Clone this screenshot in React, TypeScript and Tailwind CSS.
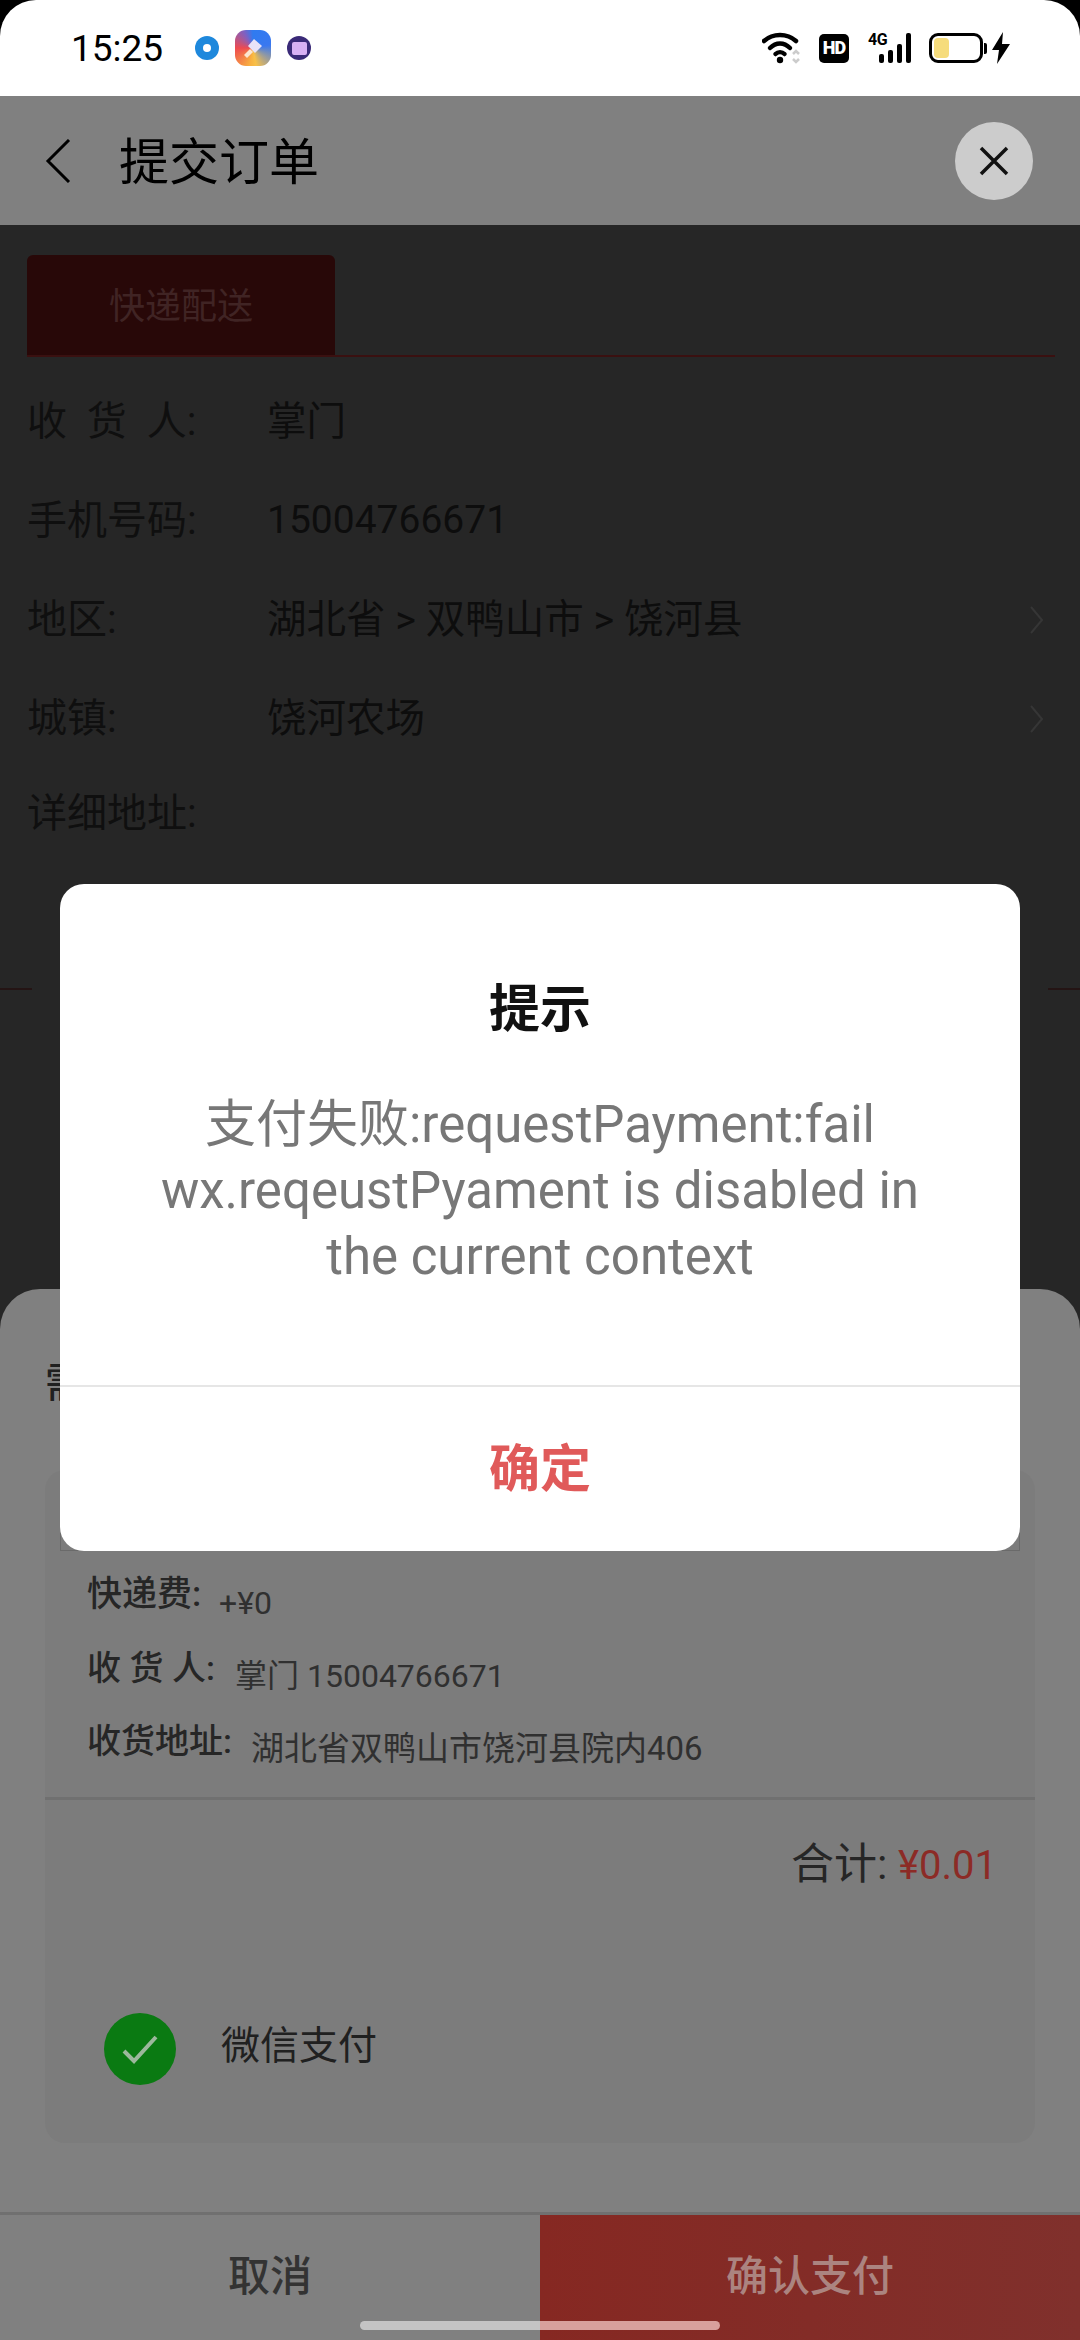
const cjk = "font-['Roboto','Noto_Sans_CJK_SC',sans-serif]";

function StatusIcons() {
    return (
        <div className="flex items-center">
            {/* wifi */}
            <svg width="40" height="32" viewBox="0 0 40 32" className="mr-[17px]">
                <path d="M2 9C11 1 25 1 34 9" fill="none" stroke="#000" strokeWidth="4.5" strokeLinecap="round" />
                <path d="M8 16C14 10 22 10 28 16" fill="none" stroke="#000" strokeWidth="4.5" strokeLinecap="round" />
                <path d="M13.5 22C16 19.5 20 19.5 22.5 22" fill="none" stroke="#000" strokeWidth="4.5" strokeLinecap="round" />
                <circle cx="18" cy="28" r="3.2" fill="#000" />
                <path d="M31 22l3-3 3 3M31 27l3 3 3-3" fill="none" stroke="#ccc" strokeWidth="2.5" />
            </svg>
            <div className="mr-[19px] flex h-[29px] w-[30px] items-center justify-center rounded-[5px] bg-black font-['Roboto',sans-serif] text-[18px] leading-none font-black tracking-[-1px] text-white">
                HD
            </div>
            <div className="relative mr-[18px] h-[30px] w-[43px]">
                <span className="absolute top-[-1px] left-0 font-['Roboto',sans-serif] text-[16px] leading-none font-bold tracking-[-0.5px] text-black">
                    4G
                </span>
                <div className="absolute right-0 bottom-0 flex items-end gap-[4px]">
                    <div className="h-[9px] w-[5px] rounded-[2px] bg-black" />
                    <div className="h-[13px] w-[5px] rounded-[2px] bg-black" />
                    <div className="h-[19px] w-[5px] rounded-[2px] bg-black" />
                    <div className="h-[30px] w-[5px] rounded-[2px] bg-black" />
                </div>
            </div>
            <div className="flex h-[30px] w-[54px] items-center rounded-[9px] border-[3px] border-black pl-[2px]">
                <div className="h-[20px] w-[15px] rounded-[4px] bg-[#f6dc7c]" />
            </div>
            <div className="ml-[1px] h-[11px] w-[3px] rounded-r-[2px] bg-black" />
            <svg width="18" height="32" viewBox="0 0 18 32" className="ml-[5px]">
                <path d="M11 0L0 18h7L5 32 18 12h-8z" fill="#000" />
            </svg>
        </div>
    );
}

function FormRow({ label, value, arrow, digits }: { label: string; value?: string; arrow?: boolean; digits?: boolean }) {
    return (
        <div className="flex h-[99px] items-center justify-between pr-[10px]">
            <div className="flex items-center">
                <span className="w-[240px] whitespace-pre text-[#0f0f0f]">{label}</span>
                {value && <span className={digits ? 'text-[39px] text-[#0d0d0d]' : 'text-[39.5px] text-[#0d0d0d]'}>{value}</span>}
            </div>
            {arrow && (
                <svg width="16" height="30" viewBox="0 0 16 30">
                    <path d="M2 2L13 15 2 28" fill="none" stroke="#363636" strokeWidth="2" />
                </svg>
            )}
        </div>
    );
}

function DetailRow({
    label,
    value,
    labelWidth,
    valueSize,
    labelSize,
}: {
    label: string;
    value: string;
    labelWidth: string;
    valueSize: string;
    labelSize: string;
}) {
    return (
        <div className="flex h-[73px] items-center">
            <span className={`${labelWidth} ${labelSize} pb-[14px] font-medium whitespace-pre text-[#262626]`}>{label}</span>
            <span className={`${valueSize} text-[#303030]`}>{value}</span>
        </div>
    );
}

export default function App() {
    return (
        <div className={`relative flex h-[2340px] w-[1080px] flex-col overflow-hidden bg-black ${cjk}`}>
            <div className="flex h-[96px] items-center justify-between rounded-t-[36px] bg-white pr-[70px] pl-[71px]">
                <div className="flex items-center">
                    <span className="w-[124px] text-[37px] leading-none text-black">15:25</span>
                    <div className="flex h-[24px] w-[24px] items-center justify-center rounded-full bg-[#1e88dc]">
                        <div className="h-[8px] w-[8px] rounded-full bg-white" />
                    </div>
                    <div className="ml-[16px] flex h-[36px] w-[36px] items-center justify-center rounded-[11px] bg-[conic-gradient(#2f7bf0_0deg,#3a78f0_80deg,#f8c048_170deg,#f8b040_190deg,#ee4a50_270deg,#8060c0_330deg,#2f7bf0_360deg)]">
                        <svg width="24" height="24" viewBox="0 0 24 24">
                            <path d="M13 3l8 7-7 7-7-7z" fill="#e8e2f8" />
                            <path d="M9 13l3 3-6 6-3-3z" fill="#fbe6d0" />
                        </svg>
                    </div>
                    <div className="ml-[16px] flex h-[24px] w-[24px] items-center justify-center rounded-full bg-[#3a2a78]">
                        <div className="h-[13px] w-[15px] rounded-[2px] bg-[#d8b0f4]" />
                    </div>
                </div>
                <StatusIcons />
            </div>

            <div className="flex h-[129px] items-center justify-between bg-[#808080] pr-[47px] pl-[45px]">
                <div className="flex items-center">
                    <svg width="26" height="44" viewBox="0 0 26 44">
                        <path d="M24 1L3 22l21 21" fill="none" stroke="#000" strokeWidth="3" />
                    </svg>
                    <span className="ml-[48px] pt-[5px] text-[50px] leading-none text-black">提交订单</span>
                </div>
                <div className="flex h-[78px] w-[78px] items-center justify-center rounded-full bg-[#cccccc]">
                    <svg width="30" height="30" viewBox="0 0 30 30">
                        <path d="M2 2l26 26M28 2L2 28" stroke="#111" strokeWidth="3.5" />
                    </svg>
                </div>
            </div>

            <div className="flex-1 bg-[#262626]">
                <div className="pt-[30px] pr-[25px] pl-[27px]">
                    <div className="border-b-[2px] border-[#3a1010]">
                        <div className="flex h-[100px] w-[308px] items-center justify-center rounded-t-[6px] bg-[#280808] pt-[4px] text-[36px] text-[#402424]">
                            快递配送
                        </div>
                    </div>
                    <div className="pt-[15px] text-[40px] leading-none">
                        <FormRow label="收  货  人:" value="掌门" />
                        <FormRow label="手机号码:" value="15004766671" digits />
                        <FormRow label="地区:" value="湖北省 > 双鸭山市 > 饶河县" arrow />
                        <FormRow label="城镇:" value="饶河农场" arrow />
                        <div className="-mt-[4px]">
                            <FormRow label="详细地址:" />
                        </div>
                    </div>
                </div>
                <div className="mt-[125px] flex justify-between">
                    <div className="h-[2px] w-[32px] bg-[#241414]" />
                    <div className="h-[2px] w-[32px] bg-[#241414]" />
                </div>
            </div>

            {/* payment sheet */}
            <div className="absolute inset-x-0 top-[1289px] bottom-0 flex flex-col rounded-t-[40px] bg-[#808080]">
                <div className="px-[45px] pt-[75px] text-[40px] leading-none font-medium text-[#202020]">需付款</div>
                <div className="mx-[45px] mt-[66px] flex h-[673px] flex-col rounded-[20px] bg-[#7c7c7c]">
                    <div className="mx-[15px] h-[81px] border border-t-0 border-[#6a6a6a]" />
                    <div className="h-[249px] border-b-[3px] border-[#707070] pt-[15px] pl-[42px]">
                        <DetailRow label="快递费:" value="+¥0" labelWidth="w-[132px]" valueSize="text-[32px]" labelSize="text-[35px]" />
                        <DetailRow label="收 货 人:" value="掌门 15004766671" labelWidth="w-[148px]" valueSize="text-[32px]" labelSize="text-[34px]" />
                        <DetailRow label="收货地址:" value="湖北省双鸭山市饶河县院内406" labelWidth="w-[164px]" valueSize="text-[33px]" labelSize="text-[34px]" />
                    </div>
                    <div className="mt-[43px] pr-[38px] text-right text-[43px] leading-none text-[#262626]">
                        合计: <span className="text-[40px] text-[#8c2b26]">¥0.01</span>
                    </div>
                    <div className="mt-[127px] flex items-center pl-[59px]">
                        <div className="flex h-[72px] w-[72px] items-center justify-center rounded-full bg-[#0a7a12]">
                            <svg width="38" height="30" viewBox="0 0 38 30">
                                <path d="M3 17l10 10L35 3" fill="none" stroke="#9cb89c" strokeWidth="4" />
                            </svg>
                        </div>
                        <span className="ml-[45px] pb-[6px] text-[39px] leading-none text-[#202020]">微信支付</span>
                    </div>
                </div>
                <div className="mt-auto flex h-[128px] border-t-[3px] border-[#707070] text-[42px] font-medium">
                    <div className="flex flex-1 items-center justify-center pb-[2px] text-[#333333]">取消</div>
                    <div className="flex flex-1 items-center justify-center bg-[linear-gradient(90deg,#862822,#80302c)] pb-[2px] text-[#ab8480]">确认支付</div>
                </div>
            </div>
            <div className="absolute bottom-[10px] left-[360px] flex h-[9px] w-[360px] overflow-hidden rounded-full">
                <div className="flex-1 bg-[#c4c4c4]" />
                <div className="flex-1 bg-[#d8a09c]" />
            </div>

            {/* alert dialog */}
            <div className="absolute top-[884px] left-[60px] flex h-[667px] w-[960px] flex-col rounded-[24px] bg-white">
                <div className="flex h-[503px] flex-col items-center border-b-[2px] border-[#e6e6e6]">
                    <div className="mt-[100px] text-[51px] leading-none font-bold text-[#111111]">提示</div>
                    <div className="mt-[57px] w-[780px] text-center text-[51px] leading-[66px] text-[#777777]">
                        支付失败:requestPayment:fail wx.reqeustPyament is disabled in the current context
                    </div>
                </div>
                <div className="flex flex-1 items-center justify-center pt-[3px] text-[51px] font-bold text-[#e05a5a]">确定</div>
            </div>
        </div>
    );
}
